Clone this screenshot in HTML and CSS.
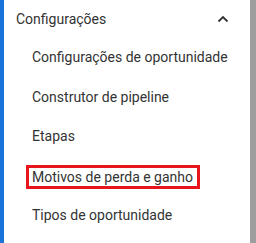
FILE: index.html
```html
<!DOCTYPE html>
<html lang="pt">
<head>
  <meta charset="UTF-8">
  <title>Configurações</title>
  <link rel="stylesheet" href="styles.css">
</head>
<body>
  <div class="sidebar">
    <div class="menu">
      <div class="menu-header">
        <span>Configurações</span>
        <svg class="chevron" width="12" height="8" viewBox="0 0 12 8">
          <path d="M1.5 6.5 L6 2 L10.5 6.5" fill="none" stroke="#333" stroke-width="1.8"/>
        </svg>
      </div>
      <ul class="menu-items">
        <li>Configurações de oportunidade</li>
        <li>Construtor de pipeline</li>
        <li>Etapas</li>
        <li><span class="highlight">Motivos de perda e ganho</span></li>
        <li>Tipos de oportunidade</li>
      </ul>
    </div>
    <div class="scrollbar"></div>
  </div>
</body>
</html>
```

FILE: styles.css
```css
body {
  margin: 0;
  font-family: Roboto, Arial, sans-serif;
  background-color: #fff;
}

.sidebar {
  display: flex;
  height: 243px;
  border-left: 4px solid #1a73d9;
}

.menu {
  flex: 1;
}

.menu-header {
  display: flex;
  justify-content: space-between;
  align-items: center;
  height: 38px;
  padding: 0 21px 0 12px;
  font-size: 14px;
  color: #333;
}

.menu-items {
  list-style-type: none;
  margin: 0;
  padding: 0;
}

.menu-items li {
  height: 39.5px;
  line-height: 39.5px;
  padding-left: 28px;
  font-size: 14px;
  color: #333;
}

.highlight {
  display: inline-block;
  line-height: 18px;
  margin-left: -6px;
  padding: 0 4px 0 3px;
  border: 3px solid #e8141e;
  vertical-align: middle;
}

.scrollbar {
  width: 6px;
  background-color: #9e9e9e;
}
```
